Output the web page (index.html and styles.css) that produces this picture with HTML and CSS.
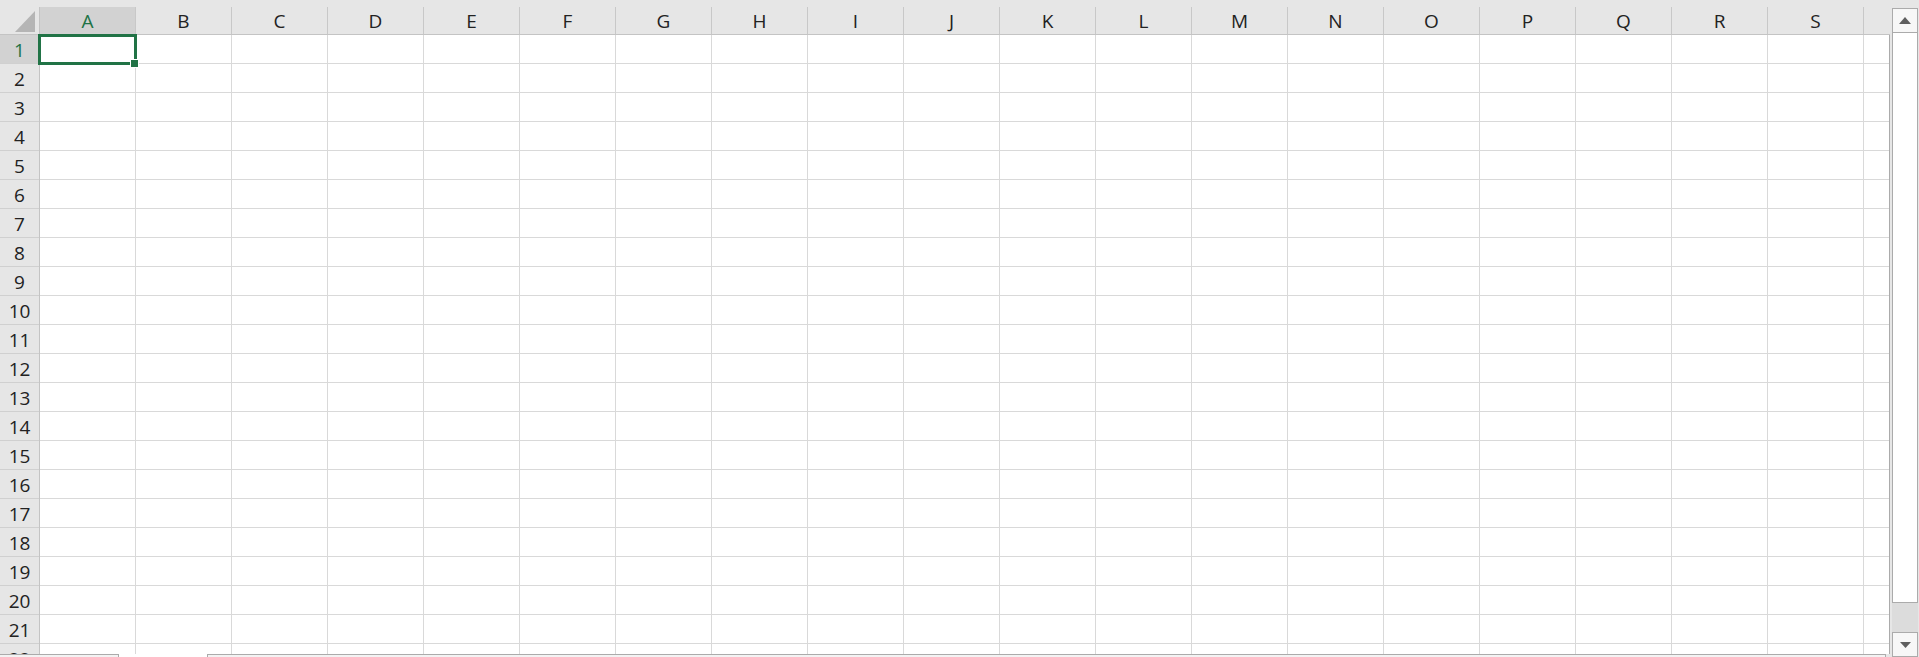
FILE: index.html
```html
<!DOCTYPE html>
<html lang="en">
<head>
<meta charset="utf-8">
<title>Sheet1</title>
<link rel="stylesheet" href="styles.css">
</head>
<body>
<div class="app">
  <div class="sheet">
    <div class="head">
      <div class="corner">
        <svg class="corner-tri" width="20" height="21" viewBox="0 0 20 21"><polygon points="20,0 20,21 0,21" fill="#b5b5b5"/></svg>
      </div>
      <div class="ch sel">A</div>
      <div class="ch">B</div>
      <div class="ch">C</div>
      <div class="ch">D</div>
      <div class="ch">E</div>
      <div class="ch">F</div>
      <div class="ch">G</div>
      <div class="ch">H</div>
      <div class="ch">I</div>
      <div class="ch">J</div>
      <div class="ch">K</div>
      <div class="ch">L</div>
      <div class="ch">M</div>
      <div class="ch">N</div>
      <div class="ch">O</div>
      <div class="ch">P</div>
      <div class="ch">Q</div>
      <div class="ch">R</div>
      <div class="ch">S</div>
      <div class="ch partial"></div>
    </div>
    <div class="body">
      <div class="rows">
        <div class="rh sel">1</div>
        <div class="rh">2</div>
        <div class="rh">3</div>
        <div class="rh">4</div>
        <div class="rh">5</div>
        <div class="rh">6</div>
        <div class="rh">7</div>
        <div class="rh">8</div>
        <div class="rh">9</div>
        <div class="rh">10</div>
        <div class="rh">11</div>
        <div class="rh">12</div>
        <div class="rh">13</div>
        <div class="rh">14</div>
        <div class="rh">15</div>
        <div class="rh">16</div>
        <div class="rh">17</div>
        <div class="rh">18</div>
        <div class="rh">19</div>
        <div class="rh">20</div>
        <div class="rh">21</div>
        <div class="rh">22</div>
      </div>
      <div class="cells"></div>
    </div>
    <div class="tabbar">
      <div class="tab-nav"></div>
      <div class="tab-active"></div>
      <div class="hscroll"></div>
    </div>
    <div class="selection"><div class="handle"></div></div>
  </div>
  <div class="vscroll">
    <div class="sb-btn">
      <svg width="12" height="7" viewBox="0 0 12 7"><polygon points="6,0 12,7 0,7" fill="#5f5f5f"/></svg>
    </div>
    <div class="sb-thumb"></div>
    <div class="sb-track"></div>
    <div class="sb-btn">
      <svg width="11" height="6" viewBox="0 0 11 6"><polygon points="0,0 11,0 5.5,6" fill="#5f5f5f"/></svg>
    </div>
  </div>
</div>
</body>
</html>
```

FILE: styles.css
```css
* {
  box-sizing: border-box;
}

html, body {
  margin: 0;
  padding: 0;
  height: 657px;
  overflow: hidden;
  background: #e6e6e6;
  font-family: "Open Sans", "Noto Sans", "DejaVu Sans", sans-serif;
}

.app {
  display: flex;
  height: 657px;
}

.sheet {
  position: relative;
  width: 1890px;
  height: 657px;
  padding-top: 7px;
  display: flex;
  flex-direction: column;
  overflow: hidden;
  flex: none;
}

.head {
  display: flex;
  height: 28px;
  border-bottom: 1px solid #c4c4c4;
  flex: none;
}

.corner {
  width: 40px;
  border-right: 1px solid #c4c4c4;
  display: flex;
  align-items: flex-end;
  justify-content: flex-end;
  padding: 0 4px 2px 0;
}

.corner-tri {
  display: block;
}

.ch {
  width: 96px;
  flex: none;
  border-right: 1px solid #c8c8c8;
  text-align: center;
  font-size: 19px;
  line-height: 29px;
  color: #222222;
}

.ch.partial {
  width: 26px;
  border-right: none;
}

.ch.sel,
.rh.sel {
  background: #d2d2d2;
  color: #217346;
}

.body {
  display: flex;
  height: 619px;
  flex: none;
  overflow: hidden;
}

.rows {
  width: 40px;
  flex: none;
  border-right: 1px solid #c4c4c4;
  display: flex;
  flex-direction: column;
}

.rh {
  height: 29px;
  flex: none;
  border-bottom: 1px solid #d0d0d0;
  text-align: center;
  font-size: 19px;
  line-height: 30px;
  color: #222222;
}

.cells {
  flex: 1;
  background-color: #ffffff;
  background-image:
    repeating-linear-gradient(to right, transparent 0 95px, #d9d9d9 95px 96px),
    repeating-linear-gradient(to bottom, transparent 0 28px, #d9d9d9 28px 29px);
  border-right: 1px solid #ababab;
}

.tabbar {
  display: flex;
  height: 30px;
  flex: none;
}

.tab-nav {
  width: 119px;
  border-top: 1px solid #ababab;
  border-right: 1px solid #ababab;
  background: #f3f3f3;
}

.tab-active {
  width: 88px;
  background: #ffffff;
}

.hscroll {
  width: 1679px;
  border-top: 1px solid #ababab;
  border-left: 1px solid #ababab;
  border-right: 1px solid #ababab;
  background: #f3f3f3;
}

.selection {
  position: absolute;
  left: 38px;
  top: 34px;
  width: 99px;
  height: 31px;
  border: 3px solid #217346;
}

.handle {
  position: absolute;
  left: 90px;
  top: 23px;
  width: 7px;
  height: 7px;
  background: #217346;
  box-shadow: 0 0 0 1px #ffffff;
}

.vscroll {
  width: 26px;
  margin-left: 2px;
  padding-top: 8px;
  display: flex;
  flex-direction: column;
  flex: none;
}

.sb-btn {
  height: 25px;
  flex: none;
  border: 1px solid #ababab;
  background: #f7f7f7;
  display: flex;
  align-items: center;
  justify-content: center;
}

.sb-thumb {
  height: 570px;
  flex: none;
  border: 1px solid #ababab;
  border-top: none;
  background: #ffffff;
}

.sb-track {
  height: 29px;
  flex: none;
  background: #dcdcdc;
}
```
